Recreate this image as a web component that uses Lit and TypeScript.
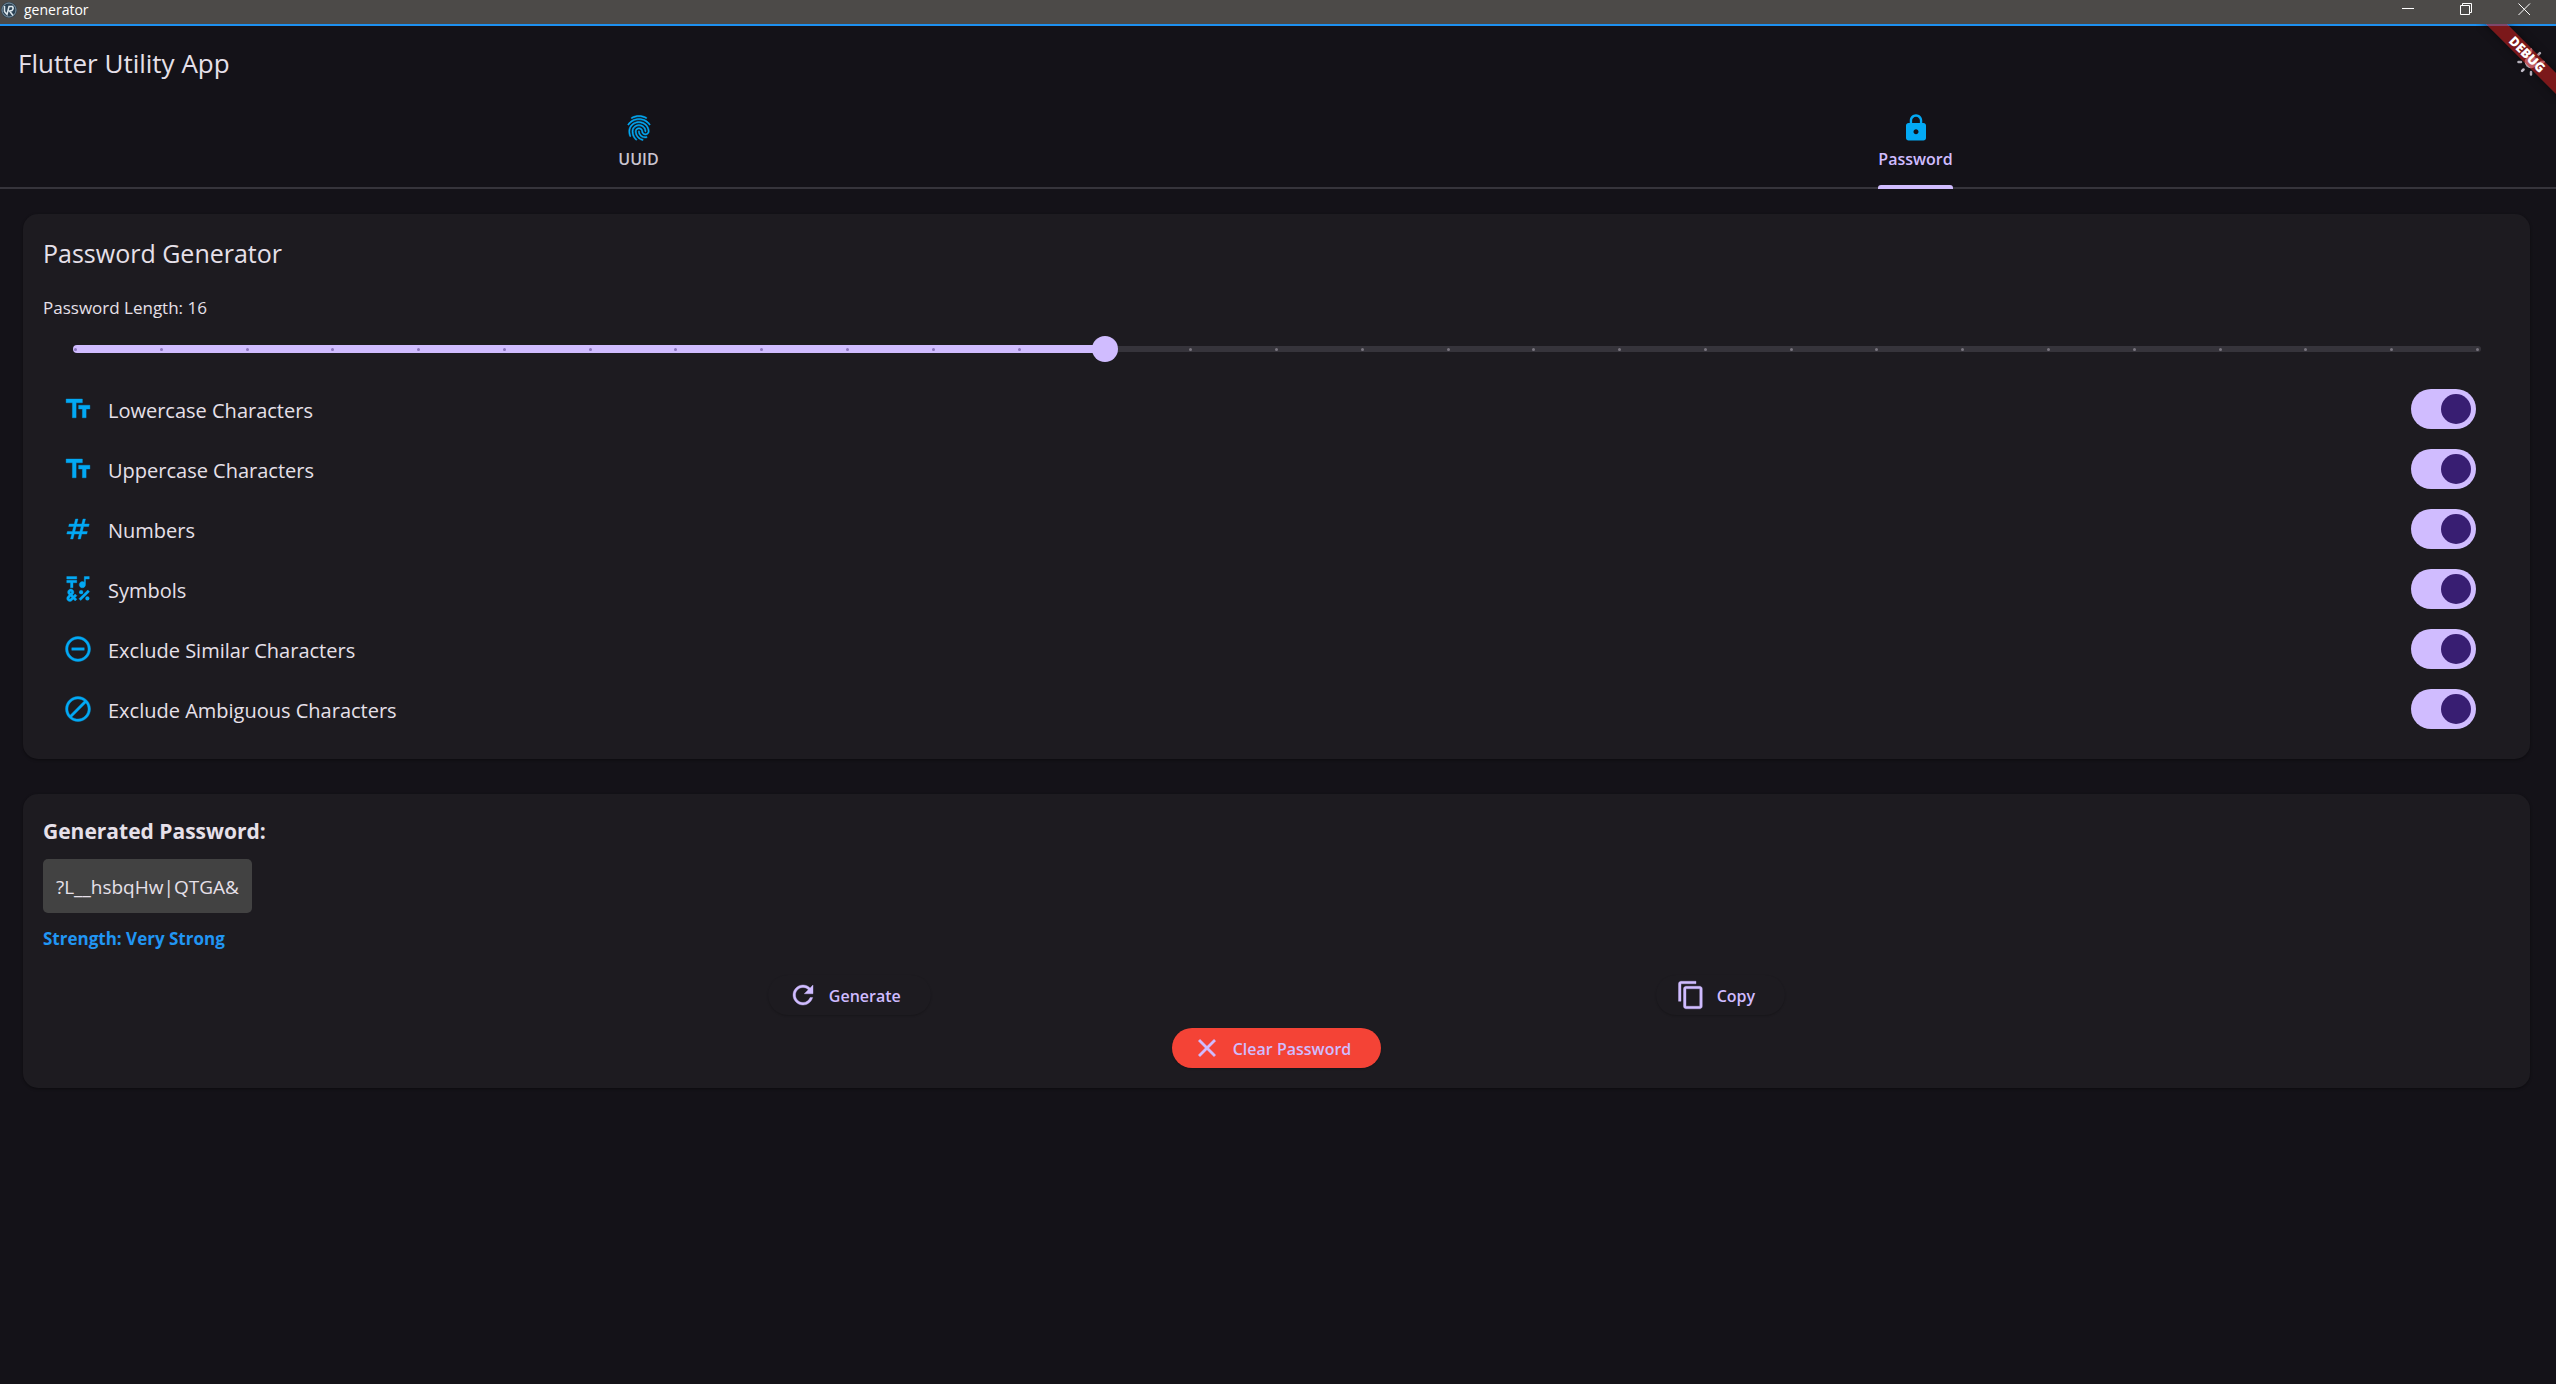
import { LitElement, css, html, svg } from "lit";
import { customElement, state } from "lit/decorators.js";
import { styleMap } from "lit/directives/style-map.js";

const icons = {
  fingerprint: svg`<path d="M17.81 4.47c-.08 0-.16-.02-.23-.06C15.66 3.42 14 3 12.01 3c-1.98 0-3.86.47-5.57 1.41-.24.13-.54.04-.68-.2-.13-.24-.04-.55.2-.68C7.82 2.52 9.86 2 12.01 2c2.13 0 3.99.47 6.03 1.52.25.13.34.43.21.67-.09.18-.26.28-.44.28zM3.5 9.72c-.1 0-.2-.03-.29-.09-.23-.16-.28-.47-.12-.7.99-1.4 2.25-2.5 3.75-3.27C9.98 4.04 14 4.03 17.15 5.65c1.5.77 2.76 1.86 3.75 3.25.16.22.11.54-.12.7-.23.16-.54.11-.7-.12-.9-1.26-2.04-2.25-3.39-2.94-2.87-1.47-6.54-1.47-9.4.01-1.36.7-2.5 1.7-3.4 2.96-.08.14-.23.21-.39.21zm6.25 12.07c-.13 0-.26-.05-.35-.15-.87-.87-1.34-1.43-2.01-2.64-.69-1.23-1.05-2.73-1.05-4.34 0-2.97 2.54-5.39 5.66-5.39s5.66 2.42 5.66 5.39c0 .28-.22.5-.5.5s-.5-.22-.5-.5c0-2.42-2.09-4.39-4.66-4.39-2.57 0-4.66 1.97-4.66 4.39 0 1.44.32 2.77.93 3.85.64 1.15 1.08 1.64 1.85 2.42.19.2.19.51 0 .71-.11.1-.24.15-.37.15zm7.17-1.85c-1.19 0-2.24-.3-3.1-.89-1.49-1.01-2.38-2.65-2.38-4.39 0-.28.22-.5.5-.5s.5.22.5.5c0 1.41.72 2.74 1.94 3.56.71.48 1.54.71 2.54.71.24 0 .64-.03 1.04-.1.27-.05.53.13.58.41.05.27-.13.53-.41.58-.57.11-1.07.12-1.21.12zM14.91 22c-.04 0-.09-.01-.13-.02-1.59-.44-2.63-1.03-3.72-2.1-1.4-1.39-2.17-3.24-2.17-5.22 0-1.62 1.38-2.94 3.08-2.94 1.7 0 3.08 1.32 3.08 2.94 0 1.07.93 1.94 2.08 1.94s2.08-.87 2.08-1.94c0-3.77-3.25-6.83-7.25-6.83-2.84 0-5.44 1.58-6.61 4.03-.39.81-.59 1.76-.59 2.8 0 .78.07 2.01.67 3.61.1.26-.03.55-.29.64-.26.1-.55-.04-.64-.29-.49-1.31-.73-2.61-.73-3.96 0-1.2.23-2.29.68-3.24 1.33-2.79 4.28-4.6 7.51-4.6 4.55 0 8.25 3.51 8.25 7.83 0 1.62-1.38 2.94-3.08 2.94s-3.08-1.32-3.08-2.94c0-1.07-.93-1.94-2.08-1.94s-2.08.87-2.08 1.94c0 1.71.66 3.31 1.87 4.51.95.94 1.86 1.46 3.27 1.85.27.07.42.35.35.61-.05.23-.26.38-.47.38z" stroke="currentColor" stroke-width="0.4"/>`,
  lock: svg`<path d="M18 8h-1V6c0-2.76-2.24-5-5-5S7 3.24 7 6v2H6c-1.1 0-2 .9-2 2v10c0 1.1.9 2 2 2h12c1.1 0 2-.9 2-2V10c0-1.1-.9-2-2-2zm-6 9c-1.1 0-2-.9-2-2s.9-2 2-2 2 .9 2 2-.9 2-2 2zm3.1-9H8.9V6c0-1.71 1.39-3.1 3.1-3.1s3.1 1.39 3.1 3.1v2z"/>`,
  textFields: svg`<path d="M2.5 4v3h5v12h3V7h5V4h-13zm19 5h-9v3h3v7h3v-7h3V9z" stroke="currentColor" stroke-width="0.3"/>`,
  tag: svg`<path d="M20.5 10 21 8h-4l1-4h-2l-1 4h-4l1-4h-2L9 8H5l-.5 2h4l-1 4h-4L3 16h4l-1 4h2l1-4h4l-1 4h2l1-4h4l.5-2h-4l1-4h4zm-7 4h-4l1-4h4l-1 4z" stroke="currentColor" stroke-width="0.3"/>`,
  symbols: svg`<g stroke="currentColor" stroke-width="0.3"><path d="M3 2h8v2H3zM6 11h2V7h3V5H3v2h3zM12.757 19.828l7.07-7.07 1.415 1.414-7.07 7.07z"/><circle cx="14.5" cy="14.5" r="1.5"/><circle cx="19.5" cy="19.5" r="1.5"/><path d="M15.5 11c1.38 0 2.5-1.12 2.5-2.5V4h3V2h-4v4.51c-.42-.32-.93-.51-1.5-.51C14.12 6 13 7.12 13 8.5s1.12 2.5 2.5 2.5zM9.74 15.96l-1.41 1.41-.71-.71.35-.35c.98-.98.98-2.56 0-3.54-.49-.49-1.13-.73-1.77-.73-.64 0-1.28.24-1.77.73-.98.98-.98 2.56 0 3.54l.35.35-1.06 1.06c-.98.98-.98 2.56 0 3.54.5.5 1.14.74 1.78.74s1.28-.24 1.77-.73l1.06-1.06 1.41 1.41 1.41-1.41-1.41-1.41 1.41-1.41-1.41-1.43zM5.85 14.2c.12-.12.26-.15.35-.15s.23.03.35.15c.19.2.19.51 0 .71l-.35.35-.35-.36c-.19-.19-.19-.51 0-.7zm0 5.65c-.12.12-.26.15-.35.15s-.23-.03-.35-.15c-.19-.19-.19-.51 0-.71l1.06-1.06.71.71-1.07 1.06z"/></g>`,
  minusCircle: svg`<path d="M7 11v2h10v-2H7zm5-9C6.48 2 2 6.48 2 12s4.48 10 10 10 10-4.48 10-10S17.52 2 12 2zm0 18c-4.41 0-8-3.59-8-8s3.59-8 8-8 8 3.59 8 8-3.59 8-8 8z" stroke="currentColor" stroke-width="0.3"/>`,
  block: svg`<path d="M12 2C6.48 2 2 6.48 2 12s4.48 10 10 10 10-4.48 10-10S17.52 2 12 2zm0 2c1.85 0 3.55.63 4.9 1.69L5.69 16.9C4.63 15.55 4 13.85 4 12c0-4.42 3.58-8 8-8zm0 16c-1.85 0-3.55-.63-4.9-1.69L18.31 7.1C19.37 8.45 20 10.15 20 12c0 4.42-3.58 8-8 8z" stroke="currentColor" stroke-width="0.3"/>`,
  refresh: svg`<path d="M17.65 6.35C16.2 4.9 14.21 4 12 4c-4.42 0-7.99 3.58-7.99 8s3.57 8 7.99 8c3.73 0 6.84-2.55 7.73-6h-2.08c-.82 2.33-3.04 4-5.65 4-3.31 0-6-2.69-6-6s2.69-6 6-6c1.66 0 3.14.69 4.22 1.78L13 11h7V4l-2.35 2.35z" stroke="currentColor" stroke-width="0.3"/>`,
  copy: svg`<path d="M16 1H4c-1.1 0-2 .9-2 2v14h2V3h12V1zm3 4H8c-1.1 0-2 .9-2 2v14c0 1.1.9 2 2 2h11c1.1 0 2-.9 2-2V7c0-1.1-.9-2-2-2zm0 16H8V7h11v14z" stroke="currentColor" stroke-width="0.3"/>`,
  clear: svg`<path d="M19 6.41 17.59 5 12 10.59 6.41 5 5 6.41 10.59 12 5 17.59 6.41 19 12 13.41 17.59 19 19 17.59 13.41 12z" stroke="currentColor" stroke-width="0.3"/>`,
  sun: svg`<circle cx="12" cy="12" r="5"/><path fill="none" stroke="currentColor" stroke-width="2" stroke-linecap="round" d="M12 2v2M12 20v2M2 12h2M20 12h2M4.9 4.9l1.1 1.1M18 18l1.1 1.1M4.9 19.1 6 18M18 6l1.1-1.1"/>`,
};

type IconName = keyof typeof icons;

const icon = (name: IconName) =>
  html`<svg class="icon" viewBox="0 0 24 24" aria-hidden="true">${icons[name]}</svg>`;

interface Option {
  id: string;
  icon: IconName;
  label: string;
}

const OPTIONS: Option[] = [
  { id: "lower", icon: "textFields", label: "Lowercase Characters" },
  { id: "upper", icon: "textFields", label: "Uppercase Characters" },
  { id: "numbers", icon: "tag", label: "Numbers" },
  { id: "symbols", icon: "symbols", label: "Symbols" },
  { id: "similar", icon: "minusCircle", label: "Exclude Similar Characters" },
  { id: "ambiguous", icon: "block", label: "Exclude Ambiguous Characters" },
];

const MIN = 4;
const MAX = 32;

@customElement("app-root")
export class AppRoot extends LitElement {
  @state() private length = 16;

  static styles = css`
    :host {
      display: flex;
      flex-direction: column;
      min-height: 100vh;
      background: #141218;
      color: #e6e0e9;
      font-family: "Open Sans", "Noto Sans", sans-serif;
      font-size: 17px;
      line-height: 24px;
    }
    * {
      box-sizing: border-box;
    }
    h1,
    h2,
    h3,
    p {
      margin: 0;
    }
    button {
      border: 0;
      padding: 0;
      background: none;
      color: inherit;
      font: inherit;
    }
    .icon {
      display: block;
      flex: none;
      width: 30px;
      height: 30px;
      fill: currentColor;
    }

    .titlebar {
      display: flex;
      align-items: center;
      height: 26px;
      padding: 0 3px 4px 1px;
      gap: 7px;
      background: #4c4a48;
      border-bottom: 2px solid #1e90f0;
      color: #fff;
      font-size: 14px;
      line-height: 20px;
    }
    .logo {
      width: 16px;
      height: 18px;
      flex: none;
    }
    .window-name {
      flex: 1;
    }
    .window-buttons {
      display: flex;
      align-self: flex-start;
    }
    .window-button {
      display: grid;
      place-items: center;
      width: 58px;
      height: 19px;
    }
    .window-button svg {
      width: 13px;
      height: 13px;
      fill: none;
      stroke: #fff;
    }

    .appbar {
      position: relative;
      display: flex;
      align-items: center;
      justify-content: space-between;
      height: 72px;
      padding: 0 10px 0 18px;
    }
    .app-title {
      padding-top: 2px;
      font-size: 26px;
      line-height: 38px;
      font-weight: 400;
    }
    .theme-button {
      color: #cac4d0;
    }
    .banner-corner {
      position: absolute;
      top: -2px;
      right: 0;
      width: 80px;
      height: 80px;
      overflow: hidden;
      pointer-events: none;
    }
    .banner {
      position: absolute;
      top: 23px;
      left: -29px;
      width: 160px;
      height: 15px;
      background: rgba(183, 28, 28, 0.63);
      box-shadow: 0 0 8px rgba(0, 0, 0, 0.5);
      color: #fff;
      font-size: 13px;
      font-weight: 800;
      line-height: 15px;
      text-align: center;
      transform: rotate(45deg);
    }

    .tabs {
      display: flex;
      height: 91px;
      padding-right: 2px;
      box-shadow: inset 0 -2px #36343b;
    }
    .tab {
      display: flex;
      flex: 1;
      justify-content: center;
      color: #cac4d0;
      font-size: 16px;
      font-weight: 600;
    }
    .tab-content {
      display: flex;
      flex-direction: column;
      align-items: center;
      gap: 4px;
      height: 91px;
      padding-top: 15px;
    }
    .tab .icon {
      color: #03a9f4;
    }
    .tab[aria-selected="true"] {
      color: #d0bcff;
    }
    .tab[aria-selected="true"] .tab-content::after {
      content: "";
      align-self: stretch;
      height: 4px;
      margin-top: auto;
      border-radius: 3px 3px 0 0;
      background: #d0bcff;
    }

    .content {
      display: flex;
      flex-direction: column;
      gap: 35px;
      padding: 25px 26px 25px 23px;
    }
    .card {
      display: flex;
      flex-direction: column;
      padding: 20px;
      border-radius: 15px;
      background: #1d1b20;
      box-shadow: 0 1px 3px rgba(0, 0, 0, 0.4);
    }
    .card-title {
      margin-bottom: 24px;
      font-size: 25px;
      line-height: 38px;
      font-weight: 400;
    }

    .slider {
      display: grid;
      align-items: center;
      height: 58px;
      margin: 0 20px 1px;
    }
    .slider > * {
      grid-area: 1 / 1;
    }
    .track {
      display: flex;
      align-items: center;
      margin: 0 9px 0 10px;
    }
    .track-active {
      flex: none;
      height: 8px;
      border-radius: 4px;
      background: #d0bcff;
    }
    .track-rest {
      flex: 1;
      height: 6px;
      border-radius: 0 3px 3px 0;
      background: #36343b;
    }
    .ticks {
      display: flex;
      justify-content: space-between;
      margin: 0 11px;
    }
    .tick {
      width: 3px;
      height: 3px;
      border-radius: 2px;
      background: #79757f;
    }
    .tick.on {
      background: #8c76be;
    }
    .range {
      appearance: none;
      width: 100%;
      height: 26px;
      margin: 0;
      background: transparent;
    }
    .range::-webkit-slider-thumb {
      appearance: none;
      width: 26px;
      height: 26px;
      border-radius: 50%;
      background: #d0bcff;
    }

    .option {
      display: flex;
      align-items: center;
      gap: 15px;
      height: 60px;
      padding: 0 34px 0 20px;
      font-size: 20px;
    }
    .option .icon {
      color: #03a9f4;
    }
    .option-label {
      flex: 1;
      padding-top: 4px;
    }
    .switch {
      appearance: none;
      display: flex;
      align-items: center;
      width: 65px;
      height: 40px;
      margin: 0;
      padding: 0 5px;
      border-radius: 20px;
      background: #36343b;
    }
    .switch::before {
      content: "";
      width: 30px;
      height: 30px;
      border-radius: 50%;
      background: #938f99;
    }
    .switch:checked {
      justify-content: flex-end;
      background: #d0bcff;
    }
    .switch:checked::before {
      background: #381e72;
    }

    .result-title {
      margin-bottom: 11px;
      font-size: 21px;
      line-height: 34px;
      font-weight: 700;
    }
    .password {
      align-self: flex-start;
      padding: 16px 13px 14px;
      border-radius: 5px;
      background: #424242;
      font-size: 19px;
    }
    .strength {
      margin: 14px 0 24px;
      color: #2196f3;
      font-weight: 700;
    }
    .actions {
      display: flex;
      justify-content: space-evenly;
      margin-bottom: 13px;
    }
    .action {
      display: flex;
      align-items: center;
      gap: 11px;
      height: 40px;
      padding: 0 30px 0 20px;
      border-radius: 20px;
      background: #1d1b20;
      box-shadow: 0 1px 2px rgba(0, 0, 0, 0.2);
      color: #d0bcff;
      font-size: 16px;
      font-weight: 600;
    }
    .action-label {
      padding-top: 2px;
    }
    .action.danger {
      align-self: center;
      background: #f44336;
    }
  `;

  private onLength(event: Event) {
    this.length = Number((event.target as HTMLInputElement).value);
  }

  private renderTitleBar() {
    return html`
      <div class="titlebar">
        <svg class="logo" viewBox="0 0 16 18" aria-hidden="true">
          <circle cx="8" cy="9" r="8" fill="#2b4254" />
          <circle cx="8" cy="9" r="7" fill="none" stroke="#7d93a3" stroke-width="1" />
          <path d="M3.5 5v5.500l2.500 3 2-8h3.500q1.500 2-.5 4l-2.500.5 3.500 4.500" fill="none" stroke="#dce6ec" stroke-width="1.500" />
        </svg>
        <span class="window-name">generator</span>
        <div class="window-buttons">
          <button class="window-button" aria-label="Minimize">
            <svg viewBox="0 0 13 13"><path d="M0 5.500h12" /></svg>
          </button>
          <button class="window-button" aria-label="Restore">
            <svg viewBox="0 0 13 13"><path d="M.5 2.500h9v9h-9zM2.500 2.500V.5h9v9H9.500" /></svg>
          </button>
          <button class="window-button" aria-label="Close">
            <svg viewBox="0 0 13 13"><path d="m.5.5 11.500 11.500m0-11.500L.5 12" /></svg>
          </button>
        </div>
      </div>
    `;
  }

  private renderSlider() {
    const ratio = (this.length - MIN) / (MAX - MIN);
    const ticks = Array.from({ length: MAX - MIN + 1 }, (_, i) => i + MIN);
    return html`
      <label for="length">Password Length: ${this.length}</label>
      <div class="slider">
        <div class="track">
          <div class="track-active" style=${styleMap({ width: `${ratio * 100}%` })}></div>
          <div class="track-rest"></div>
        </div>
        <div class="ticks">
          ${ticks.map((n) => html`<span class="tick ${n <= this.length ? "on" : ""}"></span>`)}
        </div>
        <input
          class="range"
          id="length"
          type="range"
          min=${MIN}
          max=${MAX}
          .value=${String(this.length)}
          @input=${this.onLength}
        />
      </div>
    `;
  }

  render() {
    return html`
      ${this.renderTitleBar()}
      <header class="appbar">
        <h1 class="app-title">Flutter Utility App</h1>
        <button class="theme-button" aria-label="Light mode">${icon("sun")}</button>
        <div class="banner-corner"><div class="banner">DEBUG</div></div>
      </header>
      <div class="tabs" role="tablist">
        <button class="tab" role="tab" aria-selected="false">
          <span class="tab-content">${icon("fingerprint")}<span>UUID</span></span>
        </button>
        <button class="tab" role="tab" aria-selected="true">
          <span class="tab-content">${icon("lock")}<span>Password</span></span>
        </button>
      </div>
      <main class="content">
        <section class="card">
          <h2 class="card-title">Password Generator</h2>
          ${this.renderSlider()}
          ${OPTIONS.map(
            (option) => html`
              <label class="option" for=${option.id}>
                ${icon(option.icon)}
                <span class="option-label">${option.label}</span>
                <input class="switch" id=${option.id} type="checkbox" role="switch" checked />
              </label>
            `
          )}
        </section>
        <section class="card">
          <h3 class="result-title">Generated Password:</h3>
          <output class="password">?L__hsbqHw|QTGA&amp;</output>
          <p class="strength">Strength: Very Strong</p>
          <div class="actions">
            <button class="action">${icon("refresh")}<span class="action-label">Generate</span></button>
            <button class="action">${icon("copy")}<span class="action-label">Copy</span></button>
          </div>
          <button class="action danger">${icon("clear")}<span class="action-label">Clear Password</span></button>
        </section>
      </main>
    `;
  }
}
